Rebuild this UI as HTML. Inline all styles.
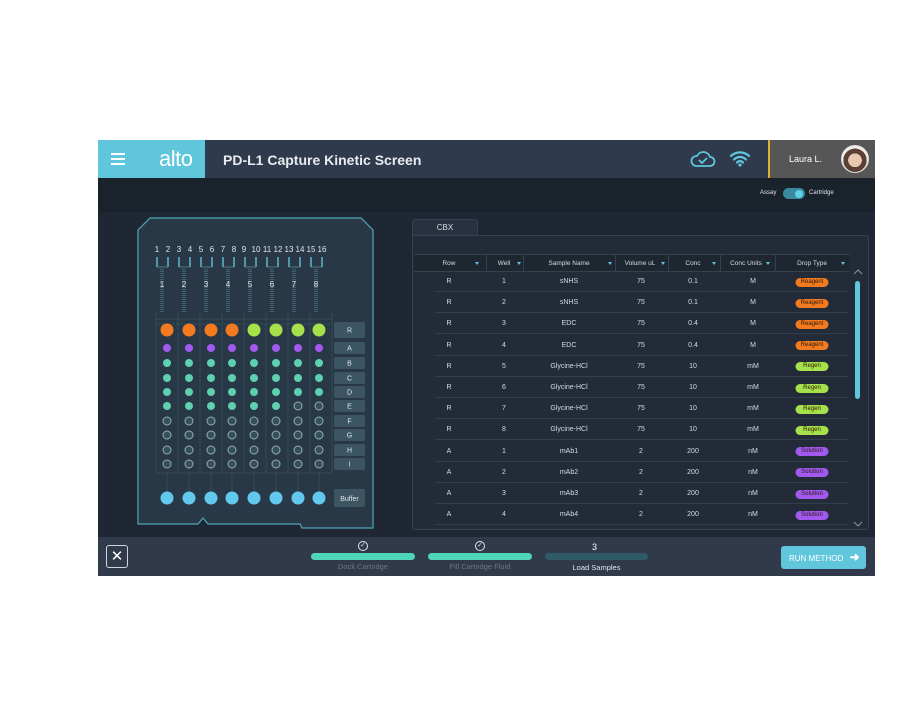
<!DOCTYPE html>
<html><head><meta charset="utf-8"><style>
*{margin:0;padding:0;box-sizing:border-box}
body{width:900px;height:716px;background:#fff;font-family:"Liberation Sans",sans-serif;position:relative;overflow:hidden}
.a{position:absolute}
.app{left:98px;top:140px;width:777px;height:436px;background:#1e2733;overflow:hidden}
.tbl{font-size:7px;color:#d5dbe2}
.cell{position:absolute;text-align:center;transform:translateX(-50%);white-space:nowrap}
.badge{position:absolute;transform:translateX(-50%);width:33px;height:9px;border-radius:5px;font-size:6px;line-height:9px;text-align:center;color:#2a1a08;display:flex;align-items:center;justify-content:center}
</style></head><body>
<div class="a app">
 <div class="a" style="left:0;top:0;width:777px;height:38px;background:#2f3a4c"></div>
 <div class="a" style="left:0;top:0;width:107px;height:38px;background:#5fc6dc"></div>
 <div class="a" style="left:13px;top:13px;width:14px;height:2px;background:#fff;box-shadow:0 5px 0 #fff,0 10px 0 #fff"></div>
 <div class="a" style="left:61px;top:6px;font-size:22px;color:#fff;letter-spacing:-0.5px">alto</div>
 <div class="a" style="left:125px;top:12px;font-size:14px;font-weight:bold;color:#e8ecf0">PD-L1 Capture Kinetic Screen</div>
 <svg class="a" style="left:592px;top:9px" width="26" height="20" viewBox="0 0 26 20"><path d="M6 17h14a4.5 4.5 0 0 0 0-9 7 7 0 0 0-13-1A5 5 0 0 0 6 17z" fill="none" stroke="#5fc6dc" stroke-width="1.8"/><path d="M9 11l3 3 5-5" fill="none" stroke="#5fc6dc" stroke-width="1.8"/></svg>
 <svg class="a" style="left:631px;top:10px" width="22" height="17" viewBox="0 0 22 17"><path d="M2 6a13 13 0 0 1 18 0M5 9.5a8.5 8.5 0 0 1 12 0M8 12.5a4 4 0 0 1 6 0" fill="none" stroke="#5fc6dc" stroke-width="2.2" stroke-linecap="round"/><circle cx="11" cy="15" r="1.6" fill="#5fc6dc"/></svg>
 <div class="a" style="left:670px;top:0;width:107px;height:38px;background:#565656;border-left:2px solid #e0b030"></div>
 <div class="a" style="left:691px;top:14px;font-size:9px;color:#fff">Laura L.</div>
 <div class="a" style="left:743px;top:5px;width:28px;height:28px;border-radius:50%;background:radial-gradient(circle at 50% 55%,#e8c8b0 0 35%,#5a4035 36% 60%,#f0ece8 61%);border:1px solid #ddd"></div>
 <div class="a" style="left:0;top:38px;width:777px;height:34px;background:#1a222c"></div>
 <div class="a" style="left:662px;top:50px;font-size:6px;color:#dfe4ea">Assay</div>
 <div class="a" style="left:685px;top:48px;width:22px;height:11px;border-radius:6px;background:#3a8aa0"></div>
 <div class="a" style="left:697px;top:50px;width:8px;height:8px;border-radius:50%;background:#5fd0ea"></div>
 <div class="a" style="left:711px;top:50px;font-size:6px;color:#dfe4ea">Cartridge</div>
 <svg class="a" style="left:38px;top:76px" width="242" height="318" viewBox="0 0 242 318">
  <path d="M14 2H225L237 14V312H166L164 308H72L67 302L62 308H2V14Z" fill="#283846" stroke="#4fa7b8" stroke-width="1.2"/>
  <g font-family="Liberation Sans" font-size="8" fill="#e0e6ec" text-anchor="middle">
   <text x="21" y="36">1</text><text x="32" y="36">2</text><text x="43" y="36">3</text><text x="54" y="36">4</text><text x="65" y="36">5</text><text x="76" y="36">6</text><text x="87" y="36">7</text><text x="98" y="36">8</text><text x="108" y="36">9</text><text x="120" y="36">10</text><text x="131" y="36">11</text><text x="142" y="36">12</text><text x="153" y="36">13</text><text x="164" y="36">14</text><text x="175" y="36">15</text><text x="186" y="36">16</text>
  </g>
  <g stroke="#5ab8cc" stroke-width="1.5" fill="none">
   <path d="M21 41v10M32 41v10M43 41v10M54 41v10M65 41v10M76 41v10M87 41v10M98 41v10M109 41v10M120 41v10M131 41v10M142 41v10M153 41v10M164 41v10M175 41v10M186 41v10"/>
  </g>
  <g stroke="#6a8a98" stroke-width="0.8" fill="none">
   <path d="M21 51h11M43 51h11M65 51h11M87 51h11M109 51h11M131 51h11M153 51h11M175 51h11"/>
  </g>
  <g fill="none" stroke="#3e6070" stroke-width="4" stroke-dasharray="1 1">
   <path d="M26 53v44M48 53v44M70 53v44M92 53v44M114 53v44M136 53v44M158 53v44M180 53v44"/>
  </g>
  <g fill="none" stroke="#3e6070" stroke-width="0.8" stroke-dasharray="1.5 1">
   <path d="M20 97v160M42 97v160M64 97v160M86 97v160M108 97v160M130 97v160M152 97v160M174 97v160M196 97v160"/>
   <path d="M20 103H196M20 108H196M20 257H196"/>
   <path d="M31 257v20M53 257v20M75 257v20M96 257v20M118 257v20M140 257v20M162 257v20M183 257v20"/>
  </g>
  <g font-family="Liberation Sans" font-size="8" fill="#e0e6ec" text-anchor="middle">
   <text x="26" y="71">1</text><text x="48" y="71">2</text><text x="70" y="71">3</text><text x="92" y="71">4</text><text x="114" y="71">5</text><text x="136" y="71">6</text><text x="158" y="71">7</text><text x="180" y="71">8</text>
  </g>
 </svg>
 <svg class="a" style="left:38px;top:76px" width="242" height="318" viewBox="0 0 242 318" id="dots"></svg>
 <div class="a" style="left:314px;top:79px;width:66px;height:17px;background:#27313f;border:1px solid #36414f;border-bottom:none;border-radius:3px 3px 0 0;font-size:8px;color:#d5dbe2;text-align:center;line-height:15px">CBX</div>
 <div class="a" style="left:314px;top:95px;width:457px;height:295px;background:#222b37;border:1px solid #36414f;border-radius:0 3px 3px 3px"></div>
 <div class="a" style="left:316px;top:114px;width:436px;height:18px;background:#1e2630;border-top:1px solid #36414f;border-bottom:1px solid #36414f"></div>
 <div class="a tbl" id="tbl" style="left:0;top:0"></div>
 <div class="a" style="left:757px;top:141px;width:5px;height:118px;border-radius:3px;background:#5fc6dc"></div>
 <svg class="a" style="left:755px;top:129px" width="10" height="6"><path d="M1 5l4-4 4 4" fill="none" stroke="#8a96a3" stroke-width="1"/></svg>
 <svg class="a" style="left:755px;top:381px" width="10" height="6"><path d="M1 1l4 4 4-4" fill="none" stroke="#8a96a3" stroke-width="1"/></svg>
 <div class="a" style="left:0;top:397px;width:777px;height:39px;background:#303a4b"></div>
 <div class="a" style="left:8px;top:405px;width:22px;height:23px;border:1px solid #cfd6dd;border-radius:3px;color:#fff;font-size:15px;text-align:center;line-height:21px">✕</div>
 <div class="a" style="left:213px;top:413px;width:104px;height:7px;border-radius:4px;background:#4fd6b8"></div>
 <div class="a" style="left:330px;top:413px;width:104px;height:7px;border-radius:4px;background:#4fd6b8"></div>
 <div class="a" style="left:447px;top:413px;width:103px;height:7px;border-radius:4px;background:#2f5a68"></div>
 <div class="a" style="left:260px;top:401px;width:10px;height:10px;border:1px solid #dfe4ea;border-radius:50%;font-size:7px;color:#dfe4ea;text-align:center;line-height:8px">✓</div>
 <div class="a" style="left:377px;top:401px;width:10px;height:10px;border:1px solid #dfe4ea;border-radius:50%;font-size:7px;color:#dfe4ea;text-align:center;line-height:8px">✓</div>
 <div class="a" style="left:494px;top:402px;font-size:9px;color:#fff">3</div>
 <div class="a" style="left:213px;top:422px;width:104px;text-align:center;font-size:7.5px;color:#6a7685">Dock Cartridge</div>
 <div class="a" style="left:330px;top:422px;width:104px;text-align:center;font-size:7.5px;color:#6a7685">Fill Cartridge Fluid</div>
 <div class="a" style="left:447px;top:423px;width:103px;text-align:center;font-size:7.5px;color:#dfe4ea">Load Samples</div>
 <div class="a" style="left:683px;top:406px;width:85px;height:23px;border-radius:3px;background:#5fc6dc;color:#fff;font-size:8px;line-height:23px;padding-left:8px">RUN METHOD <span style="font-size:12px;font-weight:bold;margin-left:4px">➜</span></div>
</div>
<script>
var s='';
var cx=[31,53,75,96,118,140,162,183];
var rows=['R','A','B','C','D','E','F','G','H','I'];
var ry=[114,132,147,162,176,190,205,219,234,248];
for(var r=0;r<10;r++){for(var c=0;c<8;c++){var f,st='none',rad=4;
 if(r==0){f=c<4?'#f47a20':'#a6e04a';rad=6.5}else if(r==1){f='#a259f0'}
 else if(r<5||(r==5&&c<6)){f='#5ed0b0'}else{f='#34505c';st='#9aaab4'}
 s+='<circle cx="'+cx[c]+'" cy="'+ry[r]+'" r="'+rad+'" fill="'+f+'" stroke="'+st+'" stroke-width="1"/>';}
 var h=r==0?16:12;
 s+='<rect x="198" y="'+(ry[r]-h/2)+'" width="31" height="'+h+'" rx="1.5" fill="#3d5563"/><text x="213.5" y="'+(ry[r]+2.5)+'" font-family="Liberation Sans" font-size="7" fill="#e0e6ec" text-anchor="middle">'+rows[r]+'</text>';}
for(var c=0;c<8;c++)s+='<circle cx="'+cx[c]+'" cy="282" r="6.5" fill="#63c8ee"/>';
s+='<rect x="198" y="273" width="31" height="18" rx="1.5" fill="#3d5563"/><text x="213.5" y="285" font-family="Liberation Sans" font-size="7" fill="#e0e6ec" text-anchor="middle">Buffer</text>';
document.getElementById('dots').innerHTML=s;
var t='',cols=[351,406,471,543,595,655,714];
var hcols=[351,406,471,542,595,648,714];
var hd=['Row','Well','Sample Name','Volume uL','Conc','Conc Units','Drop Type'];
var bnd=[316,388,425,517,570,622,677,752];
for(var i=0;i<7;i++){t+='<div class="cell" style="left:'+hcols[i]+'px;top:120px;font-size:6.5px">'+hd[i]+'</div>';}
var ax=[377,419,510,563,614,668,743];
for(var i=0;i<7;i++)t+='<div class="a" style="left:'+ax[i]+'px;top:122px;width:0;height:0;border-left:2px solid transparent;border-right:2px solid transparent;border-top:3px solid #5fc6dc"></div>';
for(var i=1;i<7;i++)t+='<div class="a" style="left:'+bnd[i]+'px;top:114px;width:1px;height:18px;background:#36414f"></div>';
var d=[['R',1,'sNHS',75,'0.1','M',0],['R',2,'sNHS',75,'0.1','M',0],['R',3,'EDC',75,'0.4','M',0],['R',4,'EDC',75,'0.4','M',0],['R',5,'Glycine-HCl',75,10,'mM',1],['R',6,'Glycine-HCl',75,10,'mM',1],['R',7,'Glycine-HCl',75,10,'mM',1],['R',8,'Glycine-HCl',75,10,'mM',1],['A',1,'mAb1',2,200,'nM',2],['A',2,'mAb2',2,200,'nM',2],['A',3,'mAb3',2,200,'nM',2],['A',4,'mAb4',2,200,'nM',2]];
var bn=['Reagent','Regen','Solution'],bc=['#f47a20','#a6e04a','#a259f0'];
for(var r=0;r<12;r++){var y=138+r*21.2;
 for(var i=0;i<6;i++)t+='<div class="cell" style="left:'+cols[i]+'px;top:'+y+'px">'+d[r][i]+'</div>';
 t+='<div class="badge" style="left:'+cols[6]+'px;top:'+(y-0.5)+'px;background:'+bc[d[r][6]]+'">'+bn[d[r][6]]+'</div>';
 t+='<div class="a" style="left:337px;top:'+(y+13)+'px;width:413px;height:1px;background:#333e4c"></div>';}
document.getElementById('tbl').innerHTML=t;
</script>
</body></html>
